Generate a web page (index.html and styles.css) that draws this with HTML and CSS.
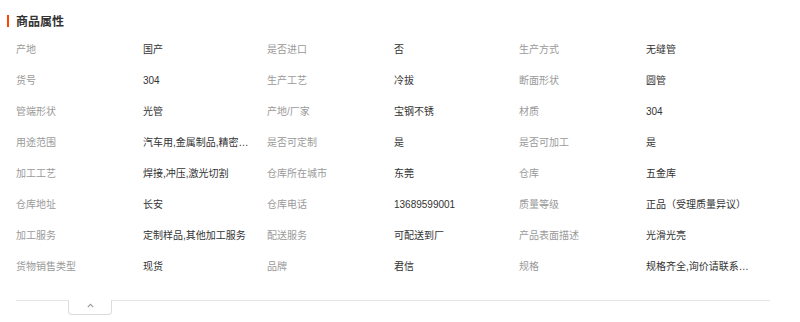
FILE: index.html
```html
<!DOCTYPE html>
<html lang="zh-CN">
<head>
<meta charset="utf-8">
<link rel="stylesheet" href="styles.css">
</head>
<body>
<section class="attrs">
  <h2 class="attrs-title">商品属性</h2>
  <div class="attrs-grid">
    <div class="cell"><span class="label">产地</span><span class="value">国产</span></div>
    <div class="cell"><span class="label">是否进口</span><span class="value">否</span></div>
    <div class="cell"><span class="label">生产方式</span><span class="value">无缝管</span></div>

    <div class="cell"><span class="label">货号</span><span class="value">304</span></div>
    <div class="cell"><span class="label">生产工艺</span><span class="value">冷拔</span></div>
    <div class="cell"><span class="label">断面形状</span><span class="value">圆管</span></div>

    <div class="cell"><span class="label">管端形状</span><span class="value">光管</span></div>
    <div class="cell"><span class="label">产地/厂家</span><span class="value">宝钢不锈</span></div>
    <div class="cell"><span class="label">材质</span><span class="value">304</span></div>

    <div class="cell"><span class="label">用途范围</span><span class="value">汽车用,金属制品,精密仪器,机械加工</span></div>
    <div class="cell"><span class="label">是否可定制</span><span class="value">是</span></div>
    <div class="cell"><span class="label">是否可加工</span><span class="value">是</span></div>

    <div class="cell"><span class="label">加工工艺</span><span class="value">焊接,冲压,激光切割</span></div>
    <div class="cell"><span class="label">仓库所在城市</span><span class="value">东莞</span></div>
    <div class="cell"><span class="label">仓库</span><span class="value">五金库</span></div>

    <div class="cell"><span class="label">仓库地址</span><span class="value">长安</span></div>
    <div class="cell"><span class="label">仓库电话</span><span class="value">13689599001</span></div>
    <div class="cell"><span class="label">质量等级</span><span class="value">正品（受理质量异议）</span></div>

    <div class="cell"><span class="label">加工服务</span><span class="value">定制样品,其他加工服务</span></div>
    <div class="cell"><span class="label">配送服务</span><span class="value">可配送到厂</span></div>
    <div class="cell"><span class="label">产品表面描述</span><span class="value">光滑光亮</span></div>

    <div class="cell"><span class="label">货物销售类型</span><span class="value">现货</span></div>
    <div class="cell"><span class="label">品牌</span><span class="value">君信</span></div>
    <div class="cell"><span class="label">规格</span><span class="value">规格齐全,询价请联系客服</span></div>
  </div>
  <div class="fold">
    <button class="fold-tab" type="button" aria-label="收起">
      <svg width="7" height="5" viewBox="0 0 7 5"><path d="M0.8 4.2 L3.5 1.3 L6.2 4.2" fill="none" stroke="#999" stroke-width="1.1"/></svg>
    </button>
  </div>
</section>
</body>
</html>
```

FILE: styles.css
```css
* { box-sizing: border-box; }
html, body {
  margin: 0;
  padding: 0;
  background: #fff;
}
body {
  font-family: "Liberation Sans", "Noto Sans CJK SC", sans-serif;
  width: 800px;
  height: 322px;
  overflow: hidden;
}
.attrs {
  padding: 13px 30px 0 16px;
}
.attrs-title {
  position: relative;
  margin: 0;
  height: 15px;
  line-height: 15px;
  font-size: 12px;
  font-weight: bold;
  color: #333;
  font-family: "Noto Sans CJK SC", sans-serif;
}
.attrs-title::before {
  content: "";
  position: absolute;
  left: -9px;
  top: 2px;
  width: 2px;
  height: 12px;
  background: #ff4400;
}
.attrs-grid {
  margin-top: 6px;
  display: grid;
  grid-template-columns: 251px 252px 251px;
  grid-auto-rows: 31px;
}
.cell {
  display: flex;
  align-items: center;
  font-size: 10px;
  line-height: 14px;
  white-space: nowrap;
}
.label {
  width: 127px;
  flex: none;
  color: #9a9a9a;
}
.value {
  width: 108px;
  overflow: hidden;
  text-overflow: ellipsis;
  color: #333;
}
.fold {
  margin-top: 18px;
  border-top: 1px solid #e5e5e5;
  height: 22px;
  padding-left: 52px;
}
.fold-tab {
  display: flex;
  align-items: flex-start;
  justify-content: center;
  margin-top: -1px;
  width: 44px;
  height: 15px;
  padding: 3px 0 0;
  background: #fff;
  border: 1px solid #dcdcdc;
  border-top: none;
  border-radius: 0 0 4px 4px;
  cursor: pointer;
}
.fold-tab svg { display: block; }
```
